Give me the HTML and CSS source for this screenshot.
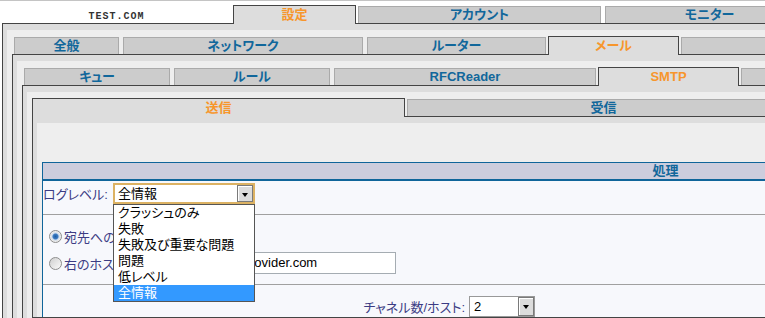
FILE: index.html
```html
<!DOCTYPE HTML>
<html>
<head>
    <title>設定 - メール - SMTP</title>
    <meta name="viewport" content="width=device-width, initial-scale=1">
    <meta http-equiv="content-type" content="text/html; charset=utf-8">
    <link rel="stylesheet" href="styles.css">
</head>
<body>
  <div id="page">

    <div class="tabs">
      <div id="logo">TEST.COM</div>
      <a class="tab active" id="t-settings" href="#">設定</a>
      <a class="tab" id="t-account" href="#">アカウント</a>
      <a class="tab" id="t-monitor" href="#">モニター</a>
    </div>

    <div class="panel" id="p-top">
      <div class="panel-in">

        <div class="tabs">
          <a class="tab" id="t-general" href="#">全般</a>
          <a class="tab" id="t-network" href="#">ネットワーク</a>
          <a class="tab" id="t-router" href="#">ルーター</a>
          <a class="tab active" id="t-mail" href="#">メール</a>
          <a class="tab" id="t-web" href="#">ウェブ</a>
        </div>

        <div class="panel">
          <div class="panel-in">

            <div class="tabs">
              <a class="tab" id="t-queue" href="#">キュー</a>
              <a class="tab" id="t-rules" href="#">ルール</a>
              <a class="tab" id="t-rfc" href="#">RFCReader</a>
              <a class="tab active" id="t-smtp" href="#">SMTP</a>
              <a class="tab" id="t-pop" href="#">POP3</a>
            </div>

            <div class="panel">
              <div class="panel-in">

                <div class="tabs">
                  <a class="tab active" id="t-send" href="#">送信</a>
                  <a class="tab" id="t-recv" href="#">受信</a>
                </div>

                <div class="panel">
                  <div class="panel-in panel-form">

                    <div class="grid">
                      <div class="grid-head">処理</div>

                      <div class="row row-log">
                        <span class="lbl lbl-log">ログレベル:</span>
                        <div class="select select-log">
                          <span class="val">全情報</span>
                          <span class="arrow"></span>
                          <ul class="menu">
                            <li>クラッシュのみ</li>
                            <li>失敗</li>
                            <li>失敗及び重要な問題</li>
                            <li>問題</li>
                            <li>低レベル</li>
                            <li class="sel">全情報</li>
                          </ul>
                        </div>
                      </div>

                      <div class="row row-send">
                        <div class="opt">
                          <span class="radio on"></span>
                          <span class="lbl">宛先へのMXで直接送信</span>
                        </div>
                        <div class="opt opt-relay">
                          <span class="radio"></span>
                          <span class="lbl opt-name">右のホストへ中継:</span>
                          <span class="input">smtp.provider.com</span>
                        </div>
                      </div>

                      <div class="row row-chan">
                        <span class="lbl lbl-chan">チャネル数/ホスト:</span>
                        <div class="select select-chan">
                          <span class="val">2</span>
                          <span class="arrow"></span>
                        </div>
                      </div>
                    </div>

                  </div>
                </div>

              </div>
            </div>

          </div>
        </div>

      </div>
    </div>

  </div>
</body>
</html>
```

FILE: styles.css
```css
* {box-sizing: border-box;}

body {
  margin: 0;
  overflow: hidden;
  background: #fff;
  border-top: 1px solid #c4c4c4;
  font-family: "Liberation Sans", "Noto Sans CJK JP", sans-serif;
  font-size: 13px;
  font-feature-settings: "palt";
}

#page {
  width: 1400px;
  padding-top: 4px;
}

#logo {
  width: 233px;
  height: 18px;
  padding-top: 5px;
  line-height: 13px;
  text-align: center;
  font-family: "Liberation Mono", monospace;
  font-size: 10px;
  font-weight: bold;
  letter-spacing: 1px;
  color: #333;
  flex: none;
}

/* tab rows */
.tabs {
  display: flex;
  align-items: flex-end;
  height: 18px;
}

.tab {
  flex: none;
  height: 17px;
  margin: 0 2px;
  background: #ccc;
  border: 1px solid #aaa;
  border-bottom: none;
  color: #11679b;
  font-weight: bold;
  text-align: center;
  line-height: 16px;
  text-decoration: none;
}

.tab.active {
  position: relative;
  z-index: 1;
  height: 19px;
  margin: 0 0 -1px;
  background: #ddd;
  border-color: #444;
  color: #f7962c;
  line-height: 17px;
}

#t-settings { width: 123px; }
#t-account { width: 243px; }
#t-monitor { width: 209px; }

#t-general { width: 105px; }
#t-network { width: 240px; }
#t-router { width: 179px; }
#t-mail { width: 131px; }
#t-web { width: 280px; }

#t-queue { width: 146px; }
#t-rules { width: 156px; }
#t-rfc { width: 262px; }
#t-smtp { width: 141px; }
#t-pop { width: 280px; }

#t-send { width: 373px; }
#t-recv { width: 393px; }

/* nested panels */
.panel {
  border: 1px solid #444;
  background: #ddd;
  padding: 6px 0 0 4px;
}

#p-top {
  margin-left: 2px;
}

.panel-in {
  background: #eee;
  padding: 6px 0 0 5px;
}

.panel-form {
  padding-top: 39px;
}

/* settings table */
.grid {
  width: 1246px;
  background: #f7f8fc;
  border-left: 1px solid #10659a;
  border-top: 1px solid #10659a;
}

.grid-head {
  height: 18px;
  background: #cdcddd;
  border-bottom: 2px solid #10659a;
  color: #11679b;
  font-weight: bold;
  text-align: center;
  line-height: 16px;
}

.row {
  border-bottom: 1px solid #a0a0a0;
}

.lbl {
  color: #3c3c84;
  white-space: nowrap;
}

.row-log {
  display: flex;
  align-items: center;
  padding: 2px 0 10px;
}

.lbl-log {
  width: 70px;
}

.select {
  position: relative;
  display: flex;
  height: 21px;
  background: #fff;
  color: #000;
}

.select .val {
  flex: 1;
  padding-left: 3px;
  line-height: 17px;
}

.select-log {
  width: 142px;
  border: 2px solid #dcb263;
}

.select-chan {
  width: 66px;
  border: 1px solid #999;
}

.select-chan .val {
  padding-left: 4px;
  line-height: 19px;
}

.arrow {
  position: relative;
  flex: none;
  width: 16px;
  border: 1px solid #7a7a7a;
  background: #dcdcdc;
  box-shadow: inset 1px 1px #fff;
}

.arrow::after {
  content: "";
  position: absolute;
  left: 4px;
  top: 7px;
  border-left: 3.5px solid transparent;
  border-right: 3.5px solid transparent;
  border-top: 4px solid #000;
}

.menu {
  position: absolute;
  z-index: 10;
  left: -2px;
  top: 19px;
  width: 142px;
  margin: 0;
  padding: 0;
  list-style: none;
  background: #fff;
  border: 1px solid #555;
}

.menu li {
  height: 16px;
  padding-left: 4px;
  line-height: 16px;
  white-space: nowrap;
}

.menu li.sel {
  background: #3399ff;
  color: #fff;
}

.row-send {
  display: flex;
  flex-direction: column;
  gap: 6px;
  padding: 11px 0 10px 6px;
}

.opt {
  display: flex;
  align-items: center;
  height: 20px;
}

.opt-relay {
  height: 22px;
}

.radio {
  flex: none;
  width: 13px;
  height: 13px;
  margin-right: 2px;
  border-radius: 50%;
  border: 1px solid #8d8d8d;
  background: linear-gradient(135deg, #cfcfcf, #fbfbfb);
}

.radio.on {
  background: radial-gradient(circle, #1d5da4 0, #3f7dc2 2.5px, #c9dbef 3.5px, #e6e6e6 4.5px, #f7f7f7 6px);
}

.opt-name {
  width: 144px;
  overflow: hidden;
}

.input {
  width: 188px;
  height: 22px;
  padding: 0 2px;
  border: 1px solid #a5acb2;
  background: #fff;
  color: #000;
  line-height: 20px;
}

.row-chan {
  display: flex;
  align-items: center;
  padding-top: 11px;
  border-bottom: none;
}

.lbl-chan {
  width: 422px;
  margin-right: 4px;
  text-align: right;
}
```
